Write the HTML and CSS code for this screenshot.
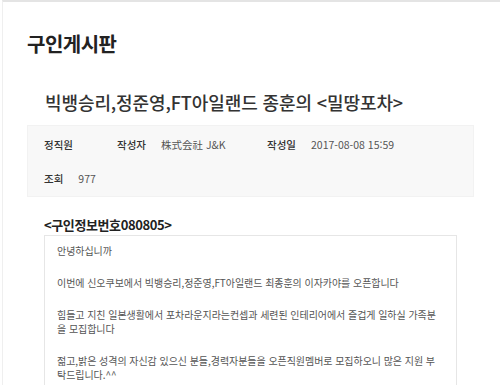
FILE: index.html
```html
<!DOCTYPE html>
<html lang="ko">
<head>
    <meta charset="UTF-8">
    <meta name="viewport" content="width=device-width, initial-scale=1.0">
    <title>구인게시판</title>
    <link rel="stylesheet" href="styles.css">
</head>
<body>
    <div class="page">
        <h1 class="board-title">구인게시판</h1>

        <div class="post">
            <h2 class="post-subject">빅뱅승리,정준영,FT아일랜드 종훈의 &lt;밀땅포차&gt;</h2>

            <div class="post-meta">
                <div class="meta-row">
                    <span class="meta-item meta-type"><strong>정직원</strong></span>
                    <span class="meta-item meta-writer"><strong>작성자</strong><span>株式会社 J&amp;K</span></span>
                    <span class="meta-item"><strong>작성일</strong><span>2017-08-08 15:59</span></span>
                </div>
                <div class="meta-row">
                    <span class="meta-item"><strong>조회</strong><span>977</span></span>
                </div>
            </div>

            <div class="post-body">
                <h3 class="job-no">&lt;구인정보번호080805&gt;</h3>
                <div class="content-box">
                    <p>안녕하십니까</p>
                    <p>이번에 신오쿠보에서 빅뱅승리,정준영,FT아일랜드 최종훈의 이자카야를 오픈합니다</p>
                    <p>힘들고 지친 일본생활에서 포차라운지라는컨셉과 세련된 인테리어에서 즐겁게 일하실 가족분을 모집합니다</p>
                    <p>젊고,밝은 성격의 자신감 있으신 분들,경력자분들을 오픈직원멤버로 모집하오니 많은 지원 부탁드립니다.^^</p>
                </div>
            </div>
        </div>
    </div>
</body>
</html>
```

FILE: styles.css
```css
body {
    margin: 0;
    font-family: "Noto Sans CJK KR", "Noto Sans", sans-serif;
    background: #ffffff;
    color: #333;
    overflow: hidden;
}

.page {
    margin-left: 2px;
    border-top: 2px solid #e4e4e4;
    border-left: 1px solid #efefef;
    height: 400px;
    padding: 0 24px;
}

.board-title {
    margin: 0;
    padding-top: 29px;
    font-size: 20px;
    font-weight: bold;
    color: #222;
    line-height: 26px;
    letter-spacing: -0.5px;
}

.post {
    padding-top: 33px;
}

.post-subject {
    margin: 0 0 0 18px;
    font-size: 18px;
    font-weight: 500;
    color: #333;
    line-height: 24px;
    letter-spacing: -0.1px;
}

.post-meta {
    margin-top: 11px;
    width: 447px;
    background: #f8f8f8;
    border: 1px solid #f2f2f2;
    padding: 1px 0 1px 16px;
    box-sizing: border-box;
    font-size: 10px;
}

.meta-row {
    display: flex;
    height: 34px;
    align-items: center;
}

.meta-item {
    display: flex;
    gap: 15px;
    color: #555;
}

.meta-item strong {
    font-weight: 500;
    color: #333;
    font-size: 10.5px;
}

.meta-type {
    width: 73px;
}

.meta-writer {
    width: 150px;
}

.meta-item span {
    font-size: 10.5px;
}

.post-body {
    padding: 19px 0 0 17px;
}

.job-no {
    margin: 0;
    font-size: 13px;
    font-weight: bold;
    color: #222;
    line-height: 18px;
    letter-spacing: -0.4px;
}

.content-box {
    margin-top: 1px;
    width: 413px;
    box-sizing: border-box;
    border: 1px solid #e6e6e6;
    padding: 8px 16px 8px 12px;
    font-size: 10px;
    color: #555;
    line-height: 14px;
    letter-spacing: -0.05px;
}

.content-box p {
    margin: 0 0 18px;
}
```
